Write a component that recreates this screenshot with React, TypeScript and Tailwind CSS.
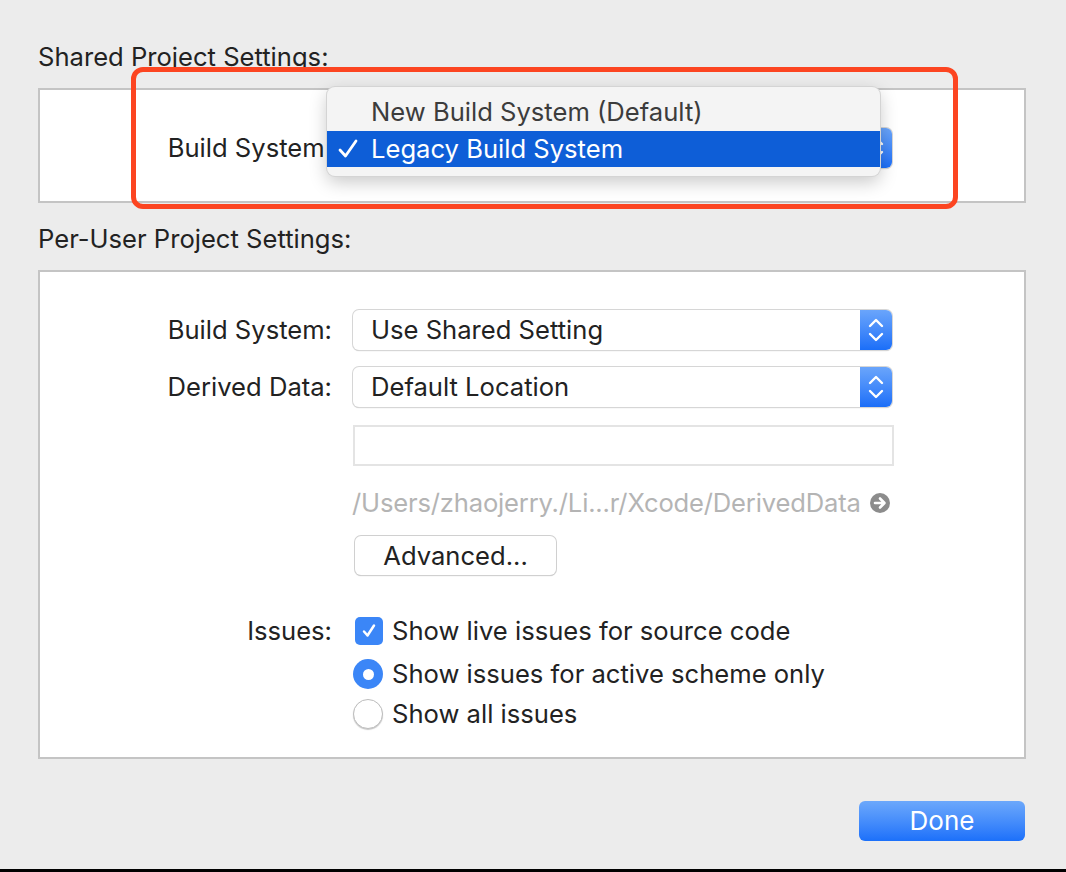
import React from 'react'

const FONT = { fontFamily: 'Inter, "Noto Sans", "Liberation Sans", sans-serif' }

function Stepper() {
  return (
    <div className="w-[32px] h-full rounded-r-[6px] bg-gradient-to-b from-[#6aa5fb] to-[#1a6ef8] flex items-center justify-center">
      <svg width="32" height="40" viewBox="0 0 32 40" fill="none" stroke="white" strokeWidth={2.4} strokeLinecap="round" strokeLinejoin="round">
        <path d="M10 16 L16 10 L22 16" />
        <path d="M10 24 L16 30 L22 24" />
      </svg>
    </div>
  )
}

function PopUp({ value }: { value: string }) {
  return (
    <div className="w-[539px] h-[40px] flex rounded-[6px] bg-white shadow-[0_0_0_1px_#d6d6d6,0_1px_1px_#b9b9b9]">
      <div className="flex-1 flex items-center pl-[18px] text-[#222]">{value}</div>
      <Stepper />
    </div>
  )
}

function Row({ label, children, className = '' }: { label?: string; children: React.ReactNode; className?: string }) {
  return (
    <div className={`flex items-center gap-[21px] ${className}`}>
      <div className="w-[292px] text-right text-[#222]">{label}</div>
      {children}
    </div>
  )
}

export default function App() {
  return (
    <div className="relative w-[1066px] h-[872px] bg-[#ececec] flex flex-col text-[25.6px] leading-[30px]" style={FONT}>
      <div className="flex-1 flex flex-col pl-[38px] pr-[40px]">
        <div className="mt-[42px] h-[30px] text-[#222]">Shared Project Settings:</div>
        <div className="mt-[16px] h-[115px] bg-white border-2 border-[#c4c4c4] pt-[38px]">
          <Row label="Build System:">
            <PopUp value="Legacy Build System" />
          </Row>
        </div>

        <div className="mt-[21px] h-[30px] text-[#222]">Per-User Project Settings:</div>
        <div className="mt-[16px] h-[489px] bg-white border-2 border-[#c4c4c4] pt-[38px] flex flex-col">
          <Row label="Build System:">
            <PopUp value="Use Shared Setting" />
          </Row>
          <Row label="Derived Data:" className="mt-[17px]">
            <PopUp value="Default Location" />
          </Row>
          <Row className="mt-[18px]">
            <div className="w-[541px] h-[41px] bg-white border-2 border-[#e4e4e4]" />
          </Row>
          <Row className="mt-[22px]">
            <div className="flex items-center -ml-[1px] text-[#b4b4b4]">
              <span className="tracking-[-0.18px]">/Users/zhaojerry./Li...r/Xcode/DerivedData</span>
              <svg className="ml-[9px]" width="20" height="20" viewBox="0 0 20 20">
                <circle cx="10" cy="10" r="10" fill="#8c8c8c" />
                <path d="M5 10 H13.5 M10 5.5 L14.5 10 L10 14.5" stroke="white" strokeWidth={2.6} fill="none" strokeLinecap="round" strokeLinejoin="round" />
              </svg>
            </div>
          </Row>
          <Row className="mt-[18px]">
            <button className="ml-[2px] w-[201px] h-[39px] rounded-[6px] bg-white text-[#222] shadow-[0_0_0_1px_#d0d0d0,0_1px_1px_#b5b5b5]">
              Advanced...
            </button>
          </Row>

          <Row label="Issues:" className="mt-[39px] h-[34px]">
            <div className="flex items-center gap-[9px] -ml-[1px]">
              <div className="ml-[3px] w-[28px] h-[28px] rounded-[5px] bg-[#3b86f7] flex items-center justify-center">
                <svg width="20" height="20" viewBox="0 0 20 20" fill="none" stroke="white" strokeWidth={2.5} strokeLinecap="round" strokeLinejoin="round">
                  <path d="M5 10.5 L8.5 14.5 L15 4.5" />
                </svg>
              </div>
              <span className="text-[#222]">Show live issues for source code</span>
            </div>
          </Row>
          <Row className="mt-[9px] h-[34px]">
            <div className="flex items-center gap-[9px] -ml-[1px]">
              <div className="ml-[1px] w-[30px] h-[30px] rounded-full bg-[#3b86f7] flex items-center justify-center">
                <div className="w-[11px] h-[11px] rounded-full bg-white" />
              </div>
              <span className="text-[#222]">Show issues for active scheme only</span>
            </div>
          </Row>
          <Row className="mt-[6px] h-[34px]">
            <div className="flex items-center gap-[9px] -ml-[1px]">
              <div className="ml-[1px] w-[30px] h-[30px] rounded-full bg-white border border-[#bdbdbd] shadow-[0_1px_1px_#c8c8c8]" />
              <span className="text-[#222]">Show all issues</span>
            </div>
          </Row>
        </div>

        <button className="self-end mt-[42px] mr-[1px] w-[166px] h-[40px] rounded-[6px] bg-gradient-to-b from-[#6ca8fb] to-[#1b70fa] text-white text-[26px]">
          Done
        </button>
      </div>
      <div className="h-[3px] bg-black" />

      {/* open menu over the shared popup */}
      <div className="absolute left-[327px] top-[87px] w-[553px] h-[89px] rounded-[8px] bg-[#f4f4f4] shadow-[0_0_0_1px_#d4d4d4,0_6px_18px_rgba(0,0,0,0.22)] pt-[6px] overflow-hidden">
        <div className="h-[38px] flex items-center pl-[44px] text-[#3c3c3c]">New Build System (Default)</div>
        <div className="h-[36px] flex items-center bg-[#0e5ed7] text-white">
          <svg className="ml-[10px] mr-[12px]" width="22" height="22" viewBox="0 0 22 22" fill="none" stroke="white" strokeWidth={2.8} strokeLinecap="round" strokeLinejoin="round">
            <path d="M3 12 L8.5 18 L19 3" />
          </svg>
          <span>Legacy Build System</span>
        </div>
      </div>

      {/* annotation frame */}
      <div className="absolute left-[131px] top-[67px] w-[827px] h-[142px] rounded-[12px] border-[5px] border-[#fc4521] pointer-events-none" />
    </div>
  )
}
